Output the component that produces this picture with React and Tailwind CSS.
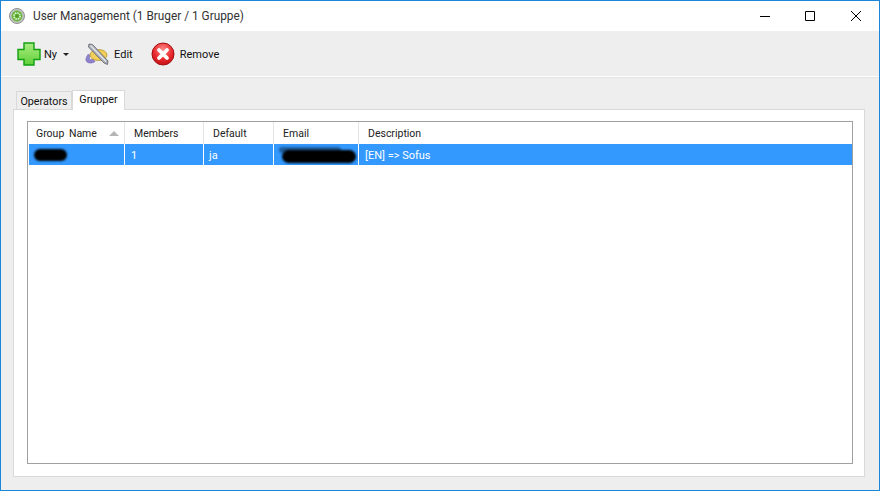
const font = { fontFamily: 'Roboto, "Noto Sans", sans-serif' }

const columns = [
  { name: 'Group Name', width: 'w-[96px]', pad: 'pl-[7px]', sorted: true },
  { name: 'Members', width: 'w-[79px]', pad: 'pl-[9px]' },
  { name: 'Default', width: 'w-[70px]', pad: 'pl-[9px]' },
  { name: 'Email', width: 'w-[85px]', pad: 'pl-[9px]' },
  { name: 'Description', width: 'flex-1', pad: 'pl-[9px]' },
]

function PlusIcon() {
  return (
    <svg width="24" height="24" viewBox="0 0 24 24">
      <defs>
        <linearGradient id="plus" x1="0" y1="0" x2="0" y2="1">
          <stop offset="0" stopColor="#a8ec82" />
          <stop offset="0.5" stopColor="#86de5c" />
          <stop offset="1" stopColor="#5fd03c" />
        </linearGradient>
      </defs>
      <path d="M7 1h10v6.500h6v10h-6V23H7v-5.500H1v-10h6z" fill="url(#plus)" stroke="#12a012" strokeWidth="1.400" />
    </svg>
  )
}

function EditIcon() {
  return (
    <svg width="24" height="24" viewBox="0 0 24 24">
      <path d="M3.500 12C1 15-.5 19 3 20.500c2.500 1 5 .5 7-1l-2-2.500c-1.500 1-3 1-3.500 0-.5-1 .5-2.500.5-3.500z" fill="#8f83cf" stroke="#6a5fb0" strokeWidth=".6" />
      <ellipse cx="13.500" cy="13" rx="8.500" ry="5.500" fill="#f2cf58" stroke="#b7952f" strokeWidth=".8" />
      <path d="M4 2l3.500.5L23 19l-.5 3.500L19 21 3.500 5z" fill="#a9adb5" stroke="#5d6068" strokeWidth=".8" />
      <path d="M5.500 3.500l15.500 16" stroke="#e6e8eb" strokeWidth="1.200" />
    </svg>
  )
}

function RemoveIcon() {
  return (
    <svg width="24" height="24" viewBox="0 0 24 24">
      <defs>
        <radialGradient id="red" cx="0.5" cy="0.3" r="0.8">
          <stop offset="0" stopColor="#ff8a8a" />
          <stop offset="0.55" stopColor="#e8282c" />
          <stop offset="1" stopColor="#b50d12" />
        </radialGradient>
      </defs>
      <circle cx="12" cy="12" r="11" fill="url(#red)" stroke="#a30f12" strokeWidth="1" />
      <path d="M8 8l8 8M16 8l-8 8" stroke="#fff" strokeWidth="3.800" strokeLinecap="round" />
    </svg>
  )
}

function AppIcon() {
  return (
    <svg width="16" height="16" viewBox="0 0 16 16">
      <circle cx="8" cy="8" r="7.500" fill="#c3c5c3" stroke="#8f918f" />
      <circle cx="8" cy="8" r="5.400" fill="#66b53a" />
      <circle cx="8" cy="8" r="3.100" fill="none" stroke="#e8f5dc" strokeWidth="1.500" strokeDasharray="1.6 .8" />
      <circle cx="8" cy="8" r="1.500" fill="#4f9c2a" />
    </svg>
  )
}

function WindowButtons() {
  return (
    <div className="flex h-full pr-[1px]">
      <div className="w-[44px] flex items-center justify-center">
        <svg width="10" height="10" viewBox="0 0 10 10"><path d="M0 5.500h10" stroke="#000" /></svg>
      </div>
      <div className="w-[45px] flex items-center justify-center">
        <svg width="10" height="10" viewBox="0 0 10 10"><path d="M.5.5h9v9h-9z" fill="none" stroke="#000" /></svg>
      </div>
      <div className="w-[46px] pl-[1px] flex items-center justify-center">
        <svg width="10" height="10" viewBox="0 0 10 10"><path d="M0 0l10 10M10 0L0 10" stroke="#000" /></svg>
      </div>
    </div>
  )
}

function Smudge({ className }) {
  return <div className={`absolute bg-black rounded-full blur-[1px] ${className}`} />
}

export default function App() {
  return (
    <div style={font} className="w-[880px] h-[491px] bg-[#eeeeee] border-x border-b border-t border-[#1b87d8] flex flex-col overflow-hidden text-[11px] text-[#111]">
      <div className="h-[30px] bg-white flex items-center justify-between shrink-0">
        <div className="flex items-center pl-[8px] gap-[8px] text-[11.85px] text-[#333]">
          <AppIcon />
          <span className="mt-[1px]">User Management (1 Bruger / 1 Gruppe)</span>
        </div>
        <WindowButtons />
      </div>

      <div className="h-[45px] shrink-0 flex items-center pl-[16px]">
        <PlusIcon />
        <span className="ml-[3px] mt-[3px]">Ny</span>
        <span className="ml-[6px] mt-[1px] w-0 h-0 border-x-[3px] border-x-transparent border-t-[3px] border-t-[#222]" />
        <div className="ml-[16px] flex items-center"><EditIcon /></div>
        <span className="ml-[5px] mt-[3px]">Edit</span>
        <div className="ml-[18px] flex items-center"><RemoveIcon /></div>
        <span className="ml-[5px] mt-[3px]">Remove</span>
      </div>
      <div className="h-px bg-white shrink-0" />
      <div className="h-px bg-[#e3e3e3] shrink-0" />

      <div className="flex-1 flex flex-col pl-[12px] pr-[14px] pb-[13px] pt-[11px] min-h-0">
        <div className="flex items-end h-[20px] pl-[3px] relative z-10 text-[10.75px]">
          <div className="h-[18px] w-[56px] pt-[3px] bg-[#eeeeee] border border-b-0 border-[#d9d9d9] flex items-center justify-center">Operators</div>
          <div className="h-[20px] w-[53px] bg-white border border-b-0 border-[#d9d9d9] flex items-center justify-center mb-[-1px]">Grupper</div>
        </div>
        <div className="flex-1 bg-white border border-[#d9d9d9] p-[11px_11px_12px_13px] min-h-0 flex flex-col">
          <div className="flex-1 border border-[#a0a0a0] pl-px flex flex-col text-[#222]">
            <div className="h-[22px] flex shrink-0 text-[10.5px] [word-spacing:2px]">
              {columns.map((c) => (
                <div key={c.name} className={`${c.width} ${c.pad} pt-[2px] border-r border-[#e5e5e5] last:border-r-0 flex items-center relative`}>
                  {c.name}
                  {c.sorted && <span className="absolute right-[5px] top-[9px] w-0 h-0 border-x-[5px] border-x-transparent border-b-[5px] border-b-[#b5b5b5]" />}
                </div>
              ))}
            </div>
            <div className="h-[21px] flex bg-[#3399ff] text-white shrink-0 relative">
              <div className="w-[96px] border-r border-white" />
              <div className="w-[79px] pl-[6px] pt-[3px] border-r border-white flex items-center">1</div>
              <div className="w-[70px] pl-[5px] pt-[3px] border-r border-white flex items-center">ja</div>
              <div className="w-[85px] border-r border-white" />
              <div className="flex-1 pl-[6px] pt-[3px] flex items-center">[EN] =&gt; Sofus</div>
              <Smudge className="left-[5px] top-[5px] w-[33px] h-[12px]" />
              <Smudge className="left-[250px] top-[3px] w-[62px] h-[6px] opacity-40" />
              <Smudge className="left-[253px] top-[6px] w-[74px] h-[13px]" />
            </div>
          </div>
        </div>
      </div>
    </div>
  )
}
